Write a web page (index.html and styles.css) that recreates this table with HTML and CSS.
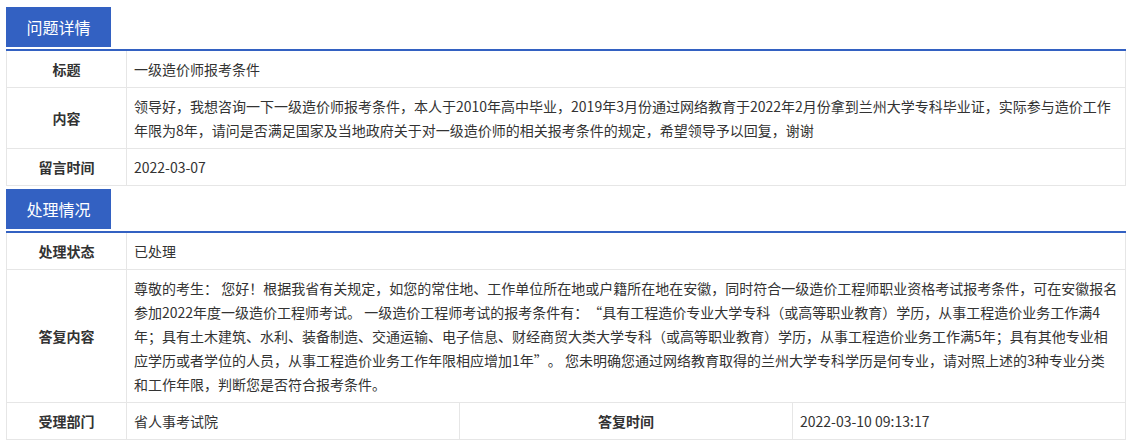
FILE: index.html
```html
<!DOCTYPE html>
<html lang="zh-CN">
<head>
<meta charset="utf-8">
<title>问题详情</title>
<link rel="stylesheet" href="styles.css">
</head>
<body>
<div class="page">
  <section class="section">
    <div class="tab">问题详情</div>
    <table class="info">
      <colgroup><col class="c-label"><col><col><col></colgroup>
      <tr><th>标题</th><td colspan="3">一级造价师报考条件</td></tr>
      <tr><th>内容</th><td colspan="3">领导好，我想咨询一下一级造价师报考条件，本人于2010年高中毕业，2019年3月份通过网络教育于2022年2月份拿到兰州大学专科毕业证，实际参与造价工作年限为8年，请问是否满足国家及当地政府关于对一级造价师的相关报考条件的规定，希望领导予以回复，谢谢</td></tr>
      <tr><th>留言时间</th><td colspan="3">2022-03-07</td></tr>
    </table>
  </section>
  <section class="section second">
    <div class="tab">处理情况</div>
    <table class="info">
      <colgroup><col class="c-label"><col><col><col></colgroup>
      <tr><th>处理状态</th><td colspan="3">已处理</td></tr>
      <tr><th>答复内容</th><td colspan="3">尊敬的考生： 您好！根据我省有关规定，如您的常住地、工作单位所在地或户籍所在地在安徽，同时符合一级造价工程师职业资格考试报考条件，可在安徽报名参加2022年度一级造价工程师考试。 一级造价工程师考试的报考条件有：“具有工程造价专业大学专科（或高等职业教育）学历，从事工程造价业务工作满4年；具有土木建筑、水利、装备制造、交通运输、电子信息、财经商贸大类大学专科（或高等职业教育）学历，从事工程造价业务工作满5年；具有其他专业相应学历或者学位的人员，从事工程造价业务工作年限相应增加1年”。 您未明确您通过网络教育取得的兰州大学专科学历是何专业，请对照上述的3种专业分类和工作年限，判断您是否符合报考条件。</td></tr>
      <tr><th>受理部门</th><td>省人事考试院</td><th>答复时间</th><td>2022-03-10 09:13:17</td></tr>
    </table>
  </section>
</div>
</body>
</html>
```
FILE: styles.css
```css
* { box-sizing: border-box; }
html, body { margin: 0; padding: 0; background: #fff; }
body {
  font-family: "Noto Sans CJK SC", "Microsoft YaHei", sans-serif;
  font-size: 14px;
  color: #333;
  text-spacing-trim: space-all;
}
.page {
  padding: 7px 6px 0 6px;
  width: 1132px;
}
.section.second { margin-top: 3px; }
.tab {
  width: 105px;
  height: 40px;
  line-height: 40px;
  background: #3361c2;
  color: #fff;
  font-size: 16px;
  text-align: center;
  margin-bottom: 2px;
}
.info {
  width: 1120px;
  border-collapse: collapse;
  table-layout: fixed;
  border-top: 2px solid #3361c2;
}
.info .c-label { width: 120px; }
.info th, .info td {
  border: 1px solid #e6e6e6;
  padding: 6px 7px;
  line-height: 24px;
  vertical-align: middle;
}
.info tr:first-child th, .info tr:first-child td { border-top: 2px solid #3361c2; }
.info th {
  font-weight: bold;
  text-align: center;
  color: #333;
}
.info td {
  text-align: left;
}
```
